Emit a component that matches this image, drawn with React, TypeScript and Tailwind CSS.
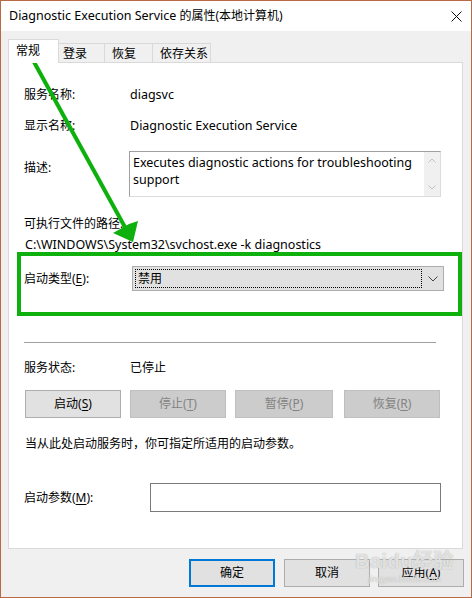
import React from 'react';

const font = { fontFamily: '"Noto Sans", "Noto Sans CJK SC", sans-serif' };

const Btn: React.FC<{ label: string; hot: string; disabled?: boolean; w: string }> = ({ label, hot, disabled, w }) => (
    <div
        className={`${w} h-[28px] flex items-center justify-center border text-[12px] leading-4 ${
            disabled ? 'bg-[#cccccc] border-[#bfbfbf] text-[#838383]' : 'bg-[#e1e1e1] border-[#adadad] text-black'
        }`}
    >
        {label}(<span className="underline underline-offset-2">{hot}</span>)
    </div>
);

const App: React.FC = () => {
    return (
        <div
            className="relative w-[472px] h-[598px] border border-[#b86a44] bg-[#f0f0f0] flex flex-col text-[12px] leading-4 text-black overflow-hidden"
            style={font}
        >
            {/* Title bar */}
            <div className="h-[30px] bg-white flex items-center justify-between pl-[8px] pr-[9px]">
                <span>
                    <span className="text-[12.5px]">Diagnostic Execution Service</span> 的属性(本地计算机)
                </span>
                <svg width="11" height="11" viewBox="0 0 11 11" className="mt-[1px]">
                    <path d="M0.5 0.5L10.5 10.5M10.5 0.5L0.5 10.5" stroke="#111" strokeWidth="1" />
                </svg>
            </div>

            {/* Tabs */}
            <div className="flex items-end mt-[9px] ml-[7px] h-[23px] -mb-px relative z-10">
                <div className="w-[51px] h-[24px] bg-white border border-b-0 border-[#d9d9d9] pl-[7px] pt-[3px]">常规</div>
                <div className="w-[46px] h-[20px] border border-l-0 border-[#d9d9d9] pl-[4px] pt-[2px]">登录</div>
                <div className="w-[48px] h-[20px] border border-l-0 border-[#d9d9d9] pl-[7px] pt-[2px]">恢复</div>
                <div className="w-[58px] h-[20px] border border-l-0 border-[#d9d9d9] pl-[7px] pt-[2px]">依存关系</div>
            </div>

            {/* Tab panel */}
            <div className="ml-[7px] w-[455px] h-[487px] bg-white border border-[#d9d9d9] flex flex-col">
                <div className="flex mt-[22px] pl-[15px] h-4 pt-[2px]">
                    <span className="w-[106px]">服务名称:</span>
                    <span className="text-[12.5px]">diagsvc</span>
                </div>
                <div className="flex mt-[15px] pl-[15px] h-4 pt-[2px]">
                    <span className="w-[106px]">显示名称:</span>
                    <span className="text-[12.5px]">Diagnostic Execution Service</span>
                </div>
                <div className="flex mt-[19px] pl-[15px]">
                    <span className="w-[105px] mt-[9px]">描述:</span>
                    <div className="w-[312px] h-[46px] border border-[#a0a0a0] border-r-[#dcdcdc] border-b-[#dcdcdc] flex">
                        <div className="flex-1 pl-[3px] pt-[2px] leading-[17px] text-[12.5px]">
                            Executes diagnostic actions for troubleshooting support
                        </div>
                        <div className="w-[16px] bg-[#f0f0f0] flex flex-col items-center justify-between py-[6px]">
                            <svg width="8" height="5" viewBox="0 0 8 5">
                                <path d="M0.5 4.5L4 1L7.5 4.5" stroke="#c0c0c0" fill="none" />
                            </svg>
                            <svg width="8" height="5" viewBox="0 0 8 5">
                                <path d="M0.5 0.5L4 4L7.5 0.5" stroke="#c0c0c0" fill="none" />
                            </svg>
                        </div>
                    </div>
                </div>
                <div className="mt-[17px] pl-[15px] h-4 pt-[2px]">可执行文件的路径:</div>
                <div className="mt-[5px] pl-[16px] h-4 pt-[2px] text-[12.5px]">C:\WINDOWS\System32\svchost.exe -k diagnostics</div>

                {/* highlighted startup type */}
                <div className="mt-px ml-[8px] w-[445px] h-[64px] border-4 border-[#0db00d] flex items-start pt-[10px] pl-[3px]">
                    <span className="w-[108px] h-[25px] flex items-center">
                        启动类型(<span className="underline underline-offset-2">E</span>):
                    </span>
                    <div className="w-[312px] h-[25px] bg-[#e1e1e1] border border-[#adadad] flex items-center">
                        <div className="ml-[2px] w-[287px] h-[19px] border border-dotted border-black flex items-center pl-[2px]">
                            禁用
                        </div>
                        <svg width="10" height="6" viewBox="0 0 10 6" className="ml-[6px]">
                            <path d="M0.5 0.5L5 5L9.5 0.5" stroke="#444" fill="none" />
                        </svg>
                    </div>
                </div>

                <div className="mt-[26px] ml-[15px] w-[412px] h-px bg-[#a0a0a0]" />

                <div className="flex mt-[15px] pl-[15px] h-4 pt-[2px]">
                    <span className="w-[106px]">服务状态:</span>
                    <span>已停止</span>
                </div>

                <div className="flex mt-[16px] pl-[16px]">
                    <Btn label="启动" hot="S" w="w-[96px]" />
                    <div className="ml-[9px]"><Btn label="停止" hot="T" w="w-[96px]" disabled /></div>
                    <div className="ml-[9px]"><Btn label="暂停" hot="P" w="w-[98px]" disabled /></div>
                    <div className="ml-[11px]"><Btn label="恢复" hot="R" w="w-[96px]" disabled /></div>
                </div>

                <div className="mt-[16px] pl-[16px] h-4 pt-[2px]">当从此处启动服务时，你可指定所适用的启动参数。</div>

                <div className="flex mt-[33px] pl-[15px] items-center">
                    <span className="w-[126px] pt-[1px]">
                        启动参数(<span className="underline underline-offset-2">M</span>):
                    </span>
                    <div className="w-[291px] h-[29px] border border-[#7a7a7a] bg-white" />
                </div>
            </div>

            {/* Dialog buttons */}
            <div className="flex justify-end mt-[10px] pr-[7px]">
                <div className="w-[86px] h-[28px] border-2 border-[#0078d7] bg-[#e1e1e1] flex items-center justify-center">确定</div>
                <div className="ml-[9px] w-[86px] h-[28px] border border-[#adadad] bg-[#e1e1e1] flex items-center justify-center">取消</div>
                <div className="ml-[8px] w-[86px] h-[28px] border border-[#adadad] bg-[#e1e1e1] flex items-center justify-center">
                    应用(<span className="underline underline-offset-2">A</span>)
                </div>
            </div>

            {/* watermark */}
            <div
                className="absolute left-[354px] top-[548px] flex flex-col items-center text-white/70 pointer-events-none"
                style={{ textShadow: '0 0 1px #9a9a9a' }}
            >
                <span className="text-[20px] leading-6 font-bold tracking-wide" style={{ fontFamily: '"Liberation Sans", "Noto Sans CJK SC", sans-serif' }}>
                    Baidu经验
                </span>
                <span className="text-[9px] leading-3" style={{ fontFamily: '"Liberation Sans", sans-serif' }}>
                    jingyan.baidu.com
                </span>
            </div>

            {/* annotation arrow */}
            <svg className="absolute left-0 top-0 pointer-events-none" width="472" height="598" viewBox="0 0 472 598">
                <line x1="33" y1="61" x2="125" y2="228" stroke="#0db00d" strokeWidth="4" />
                <polygon points="132,241 112,232 121,227 128,223 137,220" fill="#0db00d" />
            </svg>
        </div>
    );
};

export default App;
